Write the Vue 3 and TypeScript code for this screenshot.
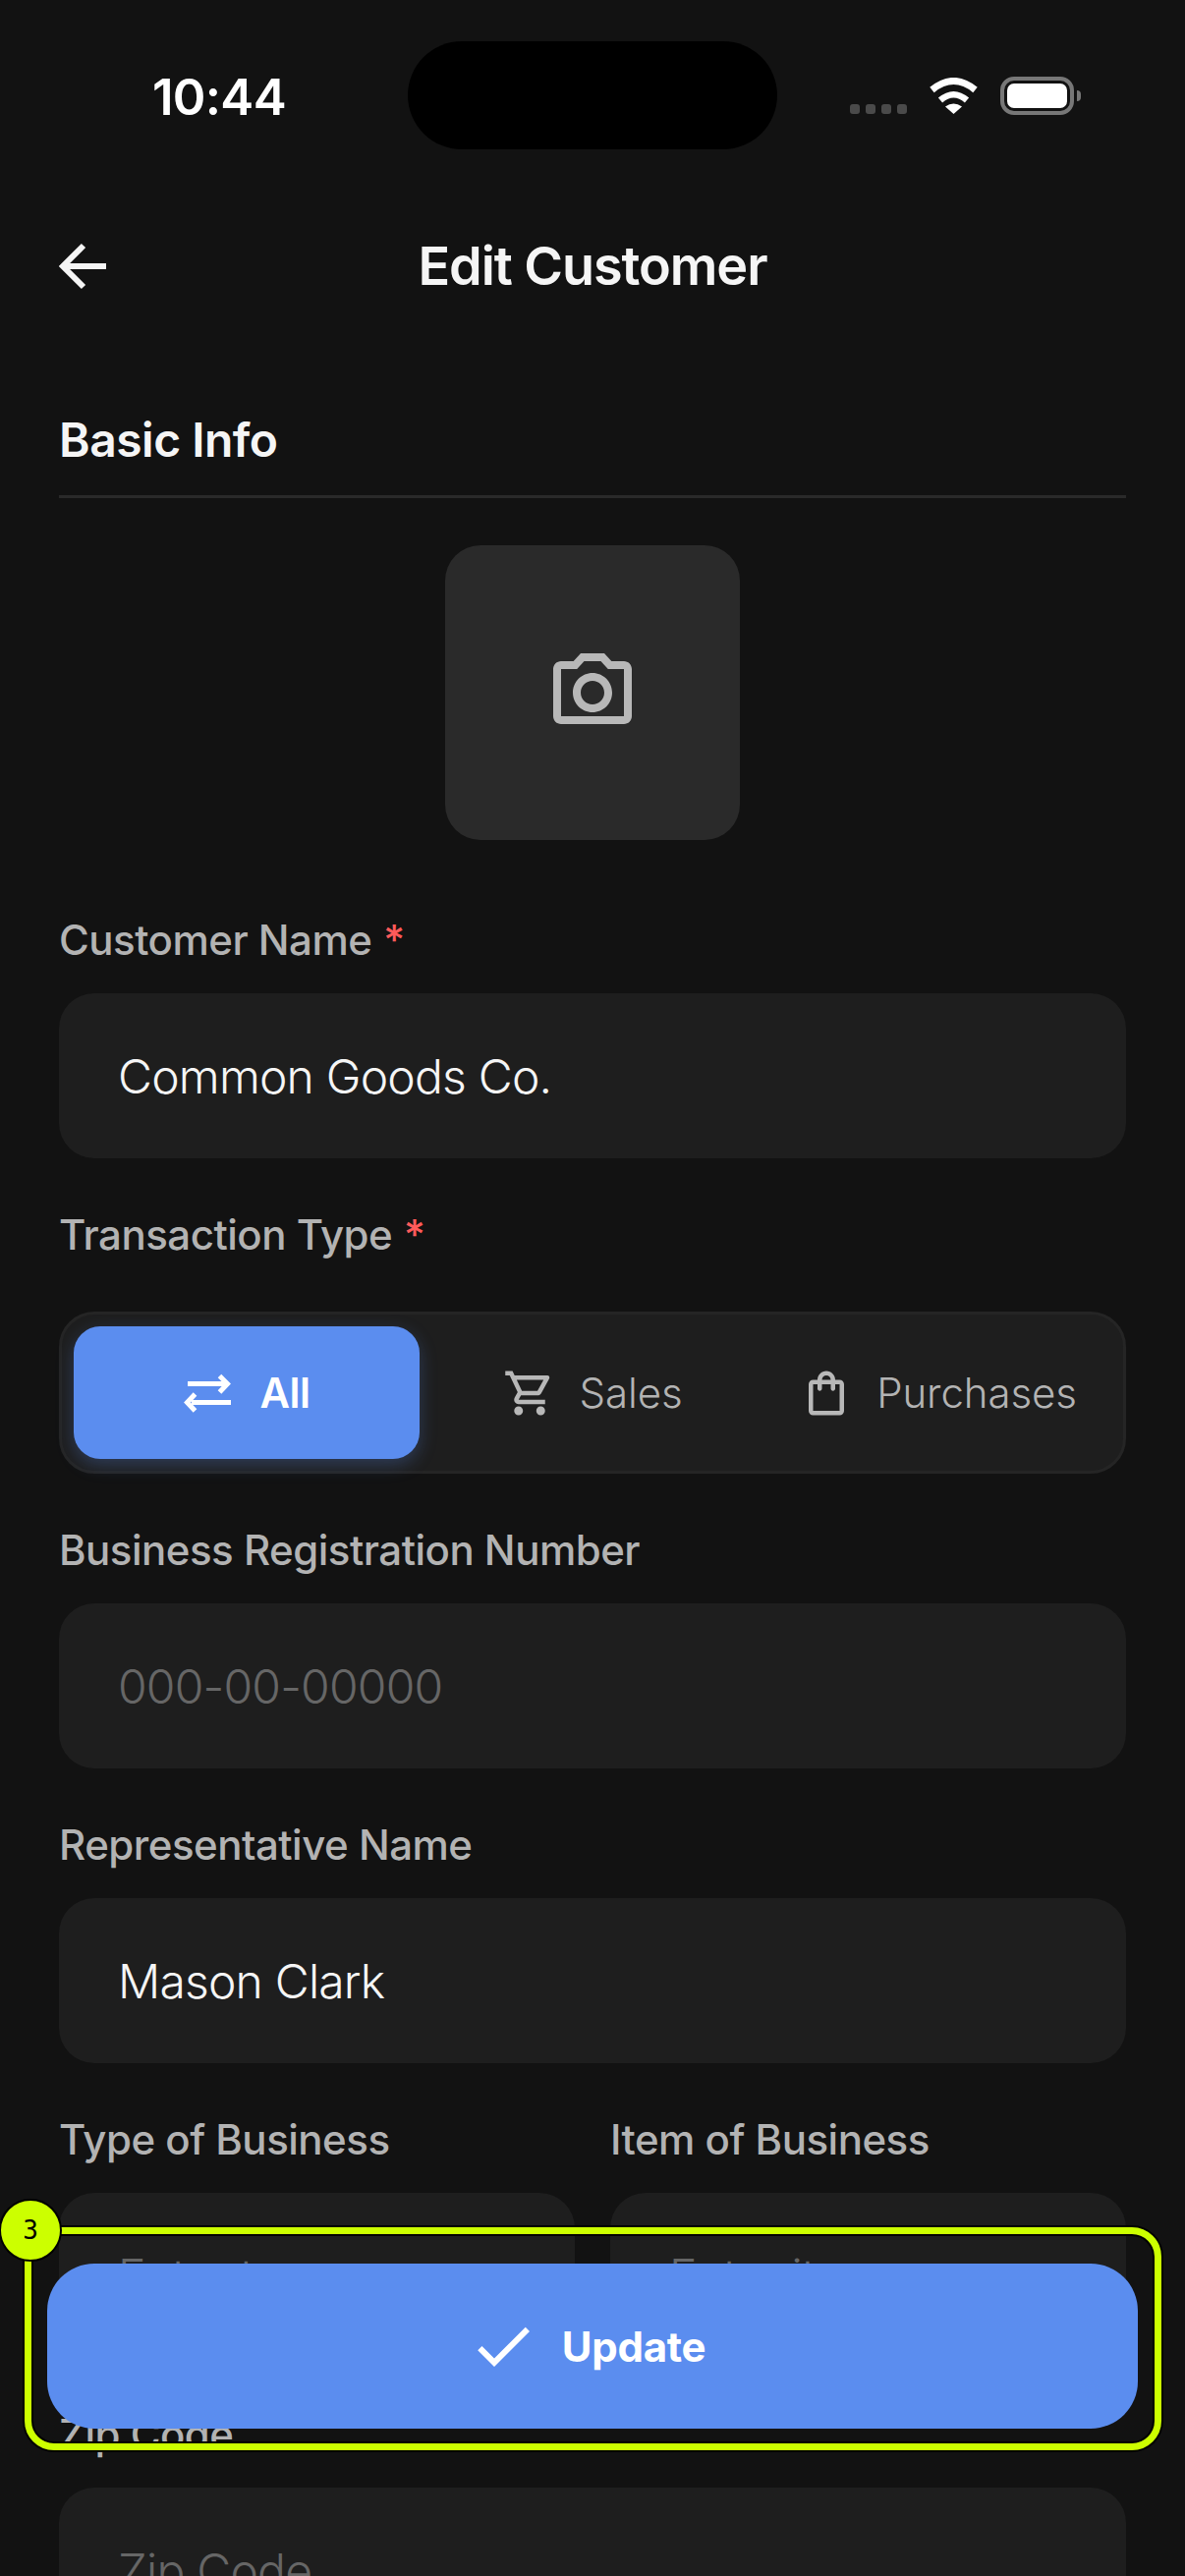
<template>
  <div class="page">
    <div class="status-bar">
      <span class="time">10:44</span>
      <div class="island"></div>
      <div class="status-icons">
        <div class="signal">
          <i v-for="n in 4" :key="n"></i>
        </div>
        <svg class="wifi" width="51" height="37" viewBox="0 0 51 37">
          <path d="M3.5 12.5Q25.5 -5.5 47.5 12.5" fill="none" stroke="#fff" stroke-width="7" />
          <path d="M12 23Q25.5 11.5 39 23" fill="none" stroke="#fff" stroke-width="6.5" />
          <path d="M17 29.5L25.5 37L34 29.5Q25.5 23.5 17 29.5Z" fill="#fff" />
        </svg>
        <div class="battery"><div class="battery-fill"></div></div>
        <div class="battery-nub"></div>
      </div>
    </div>

    <header class="top-bar">
      <svg class="back" width="48" height="48" viewBox="0 0 48 48">
        <path d="M48 24H4M25 3L4 24L25 45" fill="none" stroke="#f5f5f5" stroke-width="6" />
      </svg>
      <h1 class="title">Edit Customer</h1>
    </header>

    <main class="form">
      <h2 class="section-title">Basic Info</h2>

      <div class="photo">
        <svg width="96" height="96" viewBox="0 0 24 24" fill="#b8b8b8">
          <path d="M14.12 4l1.83 2H20v12H4V6h4.05l1.83-2h4.24M15 2H9L7.17 4H4c-1.1 0-2 .9-2 2v12c0 1.1.9 2 2 2h16c1.1 0 2-.9 2-2V6c0-1.1-.9-2-2-2h-3.17L15 2zm-3 7c1.65 0 3 1.35 3 3s-1.35 3-3 3-3-1.35-3-3 1.35-3 3-3m0-2c-2.76 0-5 2.24-5 5s2.24 5 5 5 5-2.24 5-5-2.24-5-5-5z" />
        </svg>
      </div>

      <div class="field first">
        <label class="label">Customer Name <span class="req">*</span></label>
        <input class="input" type="text" v-model="customerName" />
      </div>

      <div class="field">
        <label class="label seg-label">Transaction Type <span class="req">*</span></label>
        <div class="segment">
          <button
            v-for="tab in tabs"
            :key="tab.id"
            class="seg-item"
            :class="{ active: tab.id === activeTab }"
            type="button"
            @click="activeTab = tab.id"
          >
            <svg v-if="tab.id === 'all'" width="54" height="54" viewBox="0 0 54 54" fill="none" stroke="#fff" stroke-width="5">
              <path d="M5 17.5H45M37.5 9.5L45.5 17.5L37.5 26M49 36.5H9M12.5 28L4.5 36.5L12.5 45" />
            </svg>
            <svg v-else width="54" height="54" viewBox="0 0 24 24" fill="#b8b8b8">
              <path :d="tab.icon" />
            </svg>
            <span>{{ tab.label }}</span>
          </button>
        </div>
      </div>

      <div class="field">
        <label class="label">Business Registration Number</label>
        <input class="input" type="text" placeholder="000-00-00000" />
      </div>

      <div class="field">
        <label class="label">Representative Name</label>
        <input class="input" type="text" v-model="representative" />
      </div>

      <div class="field-row">
        <div class="field">
          <label class="label">Type of Business</label>
          <input class="input" type="text" placeholder="Enter type" />
        </div>
        <div class="field">
          <label class="label">Item of Business</label>
          <input class="input" type="text" placeholder="Enter item" />
        </div>
      </div>

      <div class="field">
        <label class="label">Zip Code</label>
        <input class="input" type="text" placeholder="Zip Code" />
      </div>
    </main>

    <button class="update" type="button">
      <svg width="72" height="72" viewBox="0 0 24 24" fill="#fff">
        <path d="M9 16.17L4.83 12l-1.42 1.41L9 19 21 7l-1.41-1.41z" />
      </svg>
      <span>Update</span>
    </button>

    <!-- annotation frame over the bottom action -->
    <div class="frame"></div>
    <div class="frame-badge">3</div>
  </div>
</template>

<script setup lang="ts">
import { ref } from 'vue';

const customerName = ref('Common Goods Co.');
const representative = ref('Mason Clark');
const activeTab = ref('all');

const tabs = [
  { id: 'all', label: 'All', icon: '' },
  {
    id: 'sales',
    label: 'Sales',
    icon: 'M15.55 13c.75 0 1.41-.41 1.75-1.03l3.58-6.49c.37-.66-.11-1.48-.87-1.48H5.21l-.94-2H1v2h2l3.6 7.59-1.35 2.44C4.52 15.37 5.48 17 7 17h12v-2H7l1.1-2h7.45zM6.16 6h12.15l-2.76 5H8.53L6.16 6zM7 18c-1.1 0-1.99.9-1.99 2S5.9 22 7 22s2-.9 2-2-.9-2-2-2zm10 0c-1.1 0-1.99.9-1.99 2s.89 2 1.99 2 2-.9 2-2-.9-2-2-2z',
  },
  {
    id: 'purchases',
    label: 'Purchases',
    icon: 'M18 6h-2c0-2.21-1.79-4-4-4S8 3.79 8 6H6c-1.1 0-2 .9-2 2v12c0 1.1.9 2 2 2h12c1.1 0 2-.9 2-2V8c0-1.1-.9-2-2-2zm-6-2c1.1 0 2 .9 2 2h-4c0-1.1.9-2 2-2zm6 16H6V8h2v2c0 .55.45 1 1 1s1-.45 1-1V8h4v2c0 .55.45 1 1 1s1-.45 1-1V8h2v12z',
  },
];
</script>

<style>
html,
body {
  margin: 0;
  background: #121212;
}
</style>

<style scoped>
.page {
  position: relative;
  width: 1206px;
  height: 2622px;
  overflow: hidden;
  background: #121212;
  color: #fff;
  font-family: Inter, "Liberation Sans", sans-serif;
}

.status-bar {
  display: flex;
  align-items: center;
  height: 110px;
  padding: 42px 0 0 155px;
}

.time {
  width: 260px;
  margin-top: 3px;
  font-size: 51px;
  font-weight: 600;
  line-height: 110px;
  letter-spacing: -0.7px;
}

.island {
  width: 376px;
  height: 110px;
  border-radius: 55px;
  background: #000;
}

.status-icons {
  display: flex;
  align-items: flex-end;
  height: 40px;
  margin-left: 74px;
}

.signal {
  display: flex;
  gap: 6px;
  margin-bottom: 1px;
}

.signal i {
  display: block;
  width: 10px;
  height: 10px;
  border-radius: 3px;
  background: #4a4a4a;
}

.wifi {
  margin-left: 22px;
  margin-bottom: 1px;
}

.battery {
  box-sizing: border-box;
  width: 75px;
  height: 39px;
  margin-left: 22px;
  padding: 3px;
  border: 4px solid #777;
  border-radius: 14px;
}

.battery-fill {
  height: 100%;
  border-radius: 7px;
  background: #fff;
}

.battery-nub {
  width: 4px;
  height: 11px;
  margin: 0 0 14px 3px;
  border-radius: 0 4px 4px 0;
  background: #777;
}

.top-bar {
  display: grid;
  grid-template-columns: 48px 1fr 48px;
  align-items: center;
  height: 72px;
  margin-top: 82px;
  padding: 0 60px;
}

.title {
  grid-column: 2;
  margin: 1px 0 0;
  font-size: 54px;
  font-weight: 600;
  line-height: 72px;
  letter-spacing: -0.02em;
  text-align: center;
  color: #f5f5f5;
}

.form {
  padding: 0 60px;
}

.section-title {
  margin: 112px 0 0;
  padding-bottom: 26px;
  border-bottom: 3px solid #2a2a2a;
  font-size: 48px;
  font-weight: 600;
  line-height: 60px;
  letter-spacing: -0.5px;
  color: #f5f5f5;
}

.photo {
  display: flex;
  align-items: center;
  justify-content: center;
  width: 300px;
  height: 300px;
  margin: 48px auto 0;
  border-radius: 36px;
  background: #2a2a2a;
}

.field {
  display: flex;
  flex-direction: column;
  margin-top: 51px;
  min-width: 0;
}

.field.first {
  margin-top: 75px;
}

.label {
  height: 54px;
  margin-bottom: 27px;
  font-size: 42px;
  font-weight: 500;
  line-height: 54px;
  letter-spacing: -0.5px;
  color: #b3b3b3;
}

.seg-label {
  margin-bottom: 51px;
}

.req {
  margin-left: 1px;
  color: #ff5a5a;
}

.input {
  box-sizing: border-box;
  width: 100%;
  height: 168px;
  padding: 0 60px;
  border: 0;
  border-radius: 36px;
  outline: 0;
  background: #1e1e1e;
  color: #f5f5f5;
  font-family: inherit;
  font-size: 48px;
  font-weight: 300;
  letter-spacing: -0.8px;
}

.input::placeholder {
  color: #666;
  opacity: 1;
}

.segment {
  box-sizing: border-box;
  display: grid;
  grid-template-columns: repeat(3, 1fr);
  height: 165px;
  padding: 12px;
  border: 3px solid #252525;
  border-radius: 36px;
  background: #1e1e1e;
}

.seg-item {
  display: flex;
  align-items: center;
  justify-content: center;
  gap: 24px;
  padding: 0;
  border: 0;
  border-radius: 27px;
  background: transparent;
  color: #b3b3b3;
  font-family: inherit;
  font-size: 42px;
  font-weight: 300;
  letter-spacing: -0.1px;
}

.seg-item.active {
  background: #5b8def;
  box-shadow: 0 6px 18px rgba(91, 141, 239, 0.28);
  color: #fff;
  font-weight: 600;
  letter-spacing: -0.5px;
}

.field-row {
  display: grid;
  grid-template-columns: 1fr 1fr;
  gap: 36px;
}

.update {
  position: absolute;
  left: 48px;
  top: 2304px;
  display: flex;
  align-items: center;
  justify-content: center;
  gap: 24px;
  width: 1110px;
  height: 168px;
  padding: 0 12px 0 0;
  border: 0;
  border-radius: 48px;
  background: #5b8def;
  color: #fff;
  font-family: inherit;
  font-size: 42px;
  font-weight: 700;
  letter-spacing: -0.3px;
}

.frame {
  position: absolute;
  box-sizing: border-box;
  left: 25px;
  top: 2267px;
  width: 1157px;
  height: 227px;
  border: 7px solid #ccff00;
  border-radius: 30px;
  box-shadow: 0 0 0 2px #000, inset 0 0 0 2px #000;
}

.frame-badge {
  position: absolute;
  box-sizing: border-box;
  left: -1px;
  top: 2238px;
  display: flex;
  align-items: center;
  justify-content: center;
  width: 64px;
  height: 64px;
  border: 2px solid #000;
  border-radius: 50%;
  background: #ccff00;
  color: #000;
  font-family: "DejaVu Sans Mono", monospace;
  font-size: 26px;
}
</style>
